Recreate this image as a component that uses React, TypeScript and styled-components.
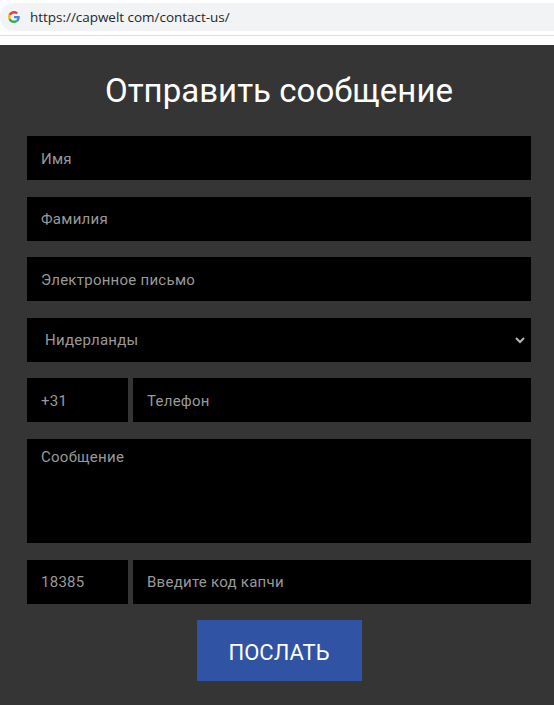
import React from "react";
import styled, { createGlobalStyle } from "styled-components";

const GlobalStyle = createGlobalStyle`
  * { box-sizing: border-box; }
  body { margin: 0; background: #fff; overflow: hidden; }
`;

const Page = styled.div`
  display: flex;
  flex-direction: column;
  height: 705px;
  font-family: Roboto, "Liberation Sans", sans-serif;
`;

const BrowserBar = styled.header`
  height: 36px;
  padding-top: 3px;
  border-bottom: 1px solid #dfe1e3;
  margin-bottom: 9px;
  flex: none;
`;

const AddressBar = styled.div`
  display: flex;
  align-items: center;
  height: 28px;
  padding-left: 8px;
  gap: 10px;
  border-radius: 14px 0 0 14px;
  background: #f1f3f4;
`;

const Url = styled.span`
  font: 13.5px/18px "Open Sans", "Noto Sans", sans-serif;
  letter-spacing: -0.03px;
  color: #25282b;
  white-space: pre;
`;

const Main = styled.main`
  flex: 1;
  padding: 0 23px 0 27px;
  background: #353535;
`;

const Title = styled.h1`
  margin: 0;
  height: 91px;
  line-height: 92px;
  font-size: 33px;
  font-weight: 400;
  letter-spacing: 0.03px;
  text-align: center;
  white-space: nowrap;
  color: #fff;
`;

const Form = styled.form`
  display: flex;
  flex-direction: column;
  gap: 16.6px;
`;

const Row = styled.div`
  display: grid;
  grid-template-columns: 101px 1fr;
  gap: 5px;
`;

const Field = styled.input`
  display: block;
  width: 100%;
  min-width: 0;
  height: 44px;
  padding: 1px 14px 0;
  border: 0;
  border-radius: 0;
  outline: 0;
  background: #000;
  color: #999;
  font: 15px/20px Roboto, sans-serif;
  letter-spacing: 0.26px;
  &::placeholder { color: #999; opacity: 1; }
`;

const Message = styled(Field).attrs({ as: "textarea" })`
  height: 104px;
  padding-top: 8px;
  resize: none;
`;

const SelectWrap = styled.div`
  position: relative;
`;

const Select = styled(Field).attrs({ as: "select" })`
  appearance: none;
  padding: 0 14px 0 18px;
`;

const Chevron = styled.svg`
  position: absolute;
  right: 6px;
  top: 18px;
  pointer-events: none;
`;

const Submit = styled.button`
  align-self: center;
  width: 165px;
  height: 61px;
  padding: 4px 0 0;
  border: 0;
  background: #3053a4;
  color: #fff;
  font: 22px/30px Roboto, sans-serif;
`;

const GoogleMark = () => (
  <svg width="12" height="12" viewBox="0 0 48 48" aria-hidden="true">
    <path fill="#EA4335" d="M24 9.5c3.54 0 6.71 1.22 9.21 3.6l6.85-6.85C35.9 2.38 30.47 0 24 0 14.62 0 6.51 5.38 2.56 13.22l7.98 6.19C12.43 13.72 17.74 9.5 24 9.5z" />
    <path fill="#4285F4" d="M46.98 24.55c0-1.57-.15-3.09-.38-4.55H24v9.02h12.94c-.58 2.96-2.26 5.48-4.78 7.18l7.73 6c4.51-4.18 7.09-10.36 7.09-17.65z" />
    <path fill="#FBBC05" d="M10.53 28.59A14.5 14.5 0 0 1 9.77 24c0-1.6.27-3.14.76-4.59l-7.98-6.19A24 24 0 0 0 0 24c0 3.88.92 7.54 2.56 10.78l7.97-6.19z" />
    <path fill="#34A853" d="M24 48c6.48 0 11.93-2.13 15.89-5.81l-7.73-6c-2.15 1.45-4.92 2.3-8.16 2.3-6.26 0-11.57-4.22-13.47-9.91l-7.98 6.19C6.51 42.62 14.62 48 24 48z" />
  </svg>
);

export default function App() {
  return (
    <Page>
      <GlobalStyle />
      <BrowserBar>
        <AddressBar>
          <GoogleMark />
          <Url>https://capwelt com/contact-us/</Url>
        </AddressBar>
      </BrowserBar>
      <Main>
        <Title>Отправить сообщение</Title>
        <Form>
          <Field placeholder="Имя" />
          <Field placeholder="Фамилия" />
          <Field placeholder="Электронное письмо" />
          <SelectWrap>
            <Select defaultValue="nl">
              <option value="nl">Нидерланды</option>
            </Select>
            <Chevron width="10" height="8" viewBox="0 0 10 8" fill="none" stroke="#b5b5b5" strokeWidth="2">
              <path d="M1 2l4 4 4-4" />
            </Chevron>
          </SelectWrap>
          <Row>
            <Field placeholder="+31" />
            <Field placeholder="Телефон" />
          </Row>
          <Message placeholder="Сообщение" />
          <Row>
            <Field placeholder="18385" />
            <Field placeholder="Введите код капчи" />
          </Row>
          <Submit type="button">ПОСЛАТЬ</Submit>
        </Form>
      </Main>
    </Page>
  );
}
